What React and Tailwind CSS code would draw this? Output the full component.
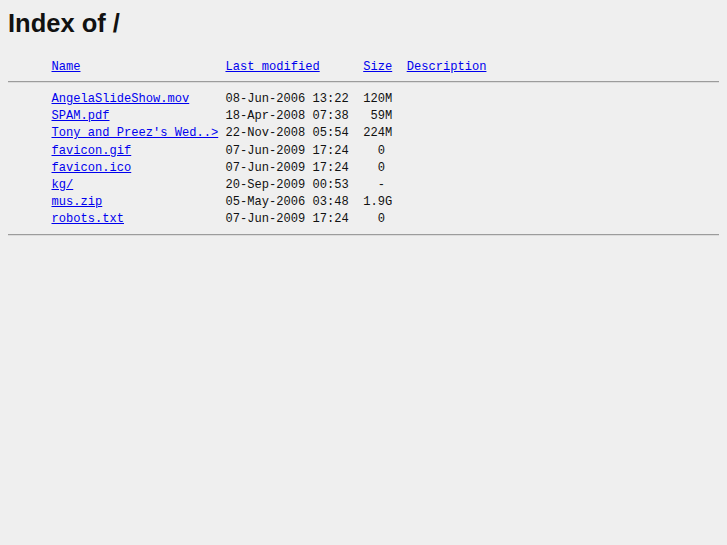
import React from "react";

const rows = [
  { name: "AngelaSlideShow.mov", date: "08-Jun-2006 13:22", size: "120M" },
  { name: "SPAM.pdf", date: "18-Apr-2008 07:38", size: " 59M" },
  { name: "Tony and Preez's Wed..>", date: "22-Nov-2008 05:54", size: "224M" },
  { name: "favicon.gif", date: "07-Jun-2009 17:24", size: "  0 " },
  { name: "favicon.ico", date: "07-Jun-2009 17:24", size: "  0 " },
  { name: "kg/", date: "20-Sep-2009 00:53", size: "  - " },
  { name: "mus.zip", date: "05-May-2006 03:48", size: "1.9G" },
  { name: "robots.txt", date: "07-Jun-2009 17:24", size: "  0 " },
];

const Link = ({ children }) => (
  <a href="#" className="text-[#0000ee] underline">
    {children}
  </a>
);

const Hr = ({ className }) => (
  <div className={"border-t border-b border-t-[#9c9c9c] border-b-[#dcdcdc] " + className} />
);

export default function App() {
  return (
    <div className="min-h-[545px] bg-[#efefef] px-2 text-[#111]">
      <h1 className="pt-[9px] font-['Liberation_Sans',Arial,sans-serif] text-[25.5px] font-bold leading-[29px]">
        Index of /
      </h1>
      <div className="font-['Liberation_Mono','Courier_New',monospace] text-[12.08px] leading-[17.14px] whitespace-pre">
        <div className="mt-[21px]">
          {"      "}
          <Link>Name</Link>
          {"                    "}
          <Link>Last modified</Link>
          {"      "}
          <Link>Size</Link>
          {"  "}
          <Link>Description</Link>
        </div>
        <Hr className="mt-[5px]" />
        <div className="mt-[8px]">
          {rows.map((r) => (
            <div key={r.name}>
              {"      "}
              <Link>{r.name}</Link>
              {" ".repeat(24 - r.name.length)}
              {r.date}
              {"  "}
              {r.size}
              {"  "}
            </div>
          ))}
        </div>
        <Hr className="mt-[6px]" />
      </div>
    </div>
  );
}
